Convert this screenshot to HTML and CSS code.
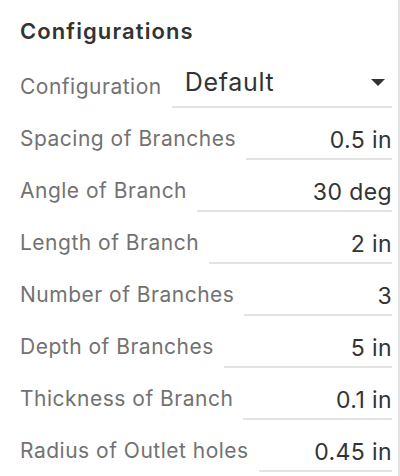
FILE: index.html
```html
<!DOCTYPE html>
<html>
<head>
<meta charset="utf-8">
<link rel="stylesheet" href="styles.css">
</head>
<body>
<div class="panel">
  <h2 class="title">Configurations</h2>
  <div class="row">
    <span class="label">Configuration</span>
    <div class="field select">
      <span class="select-value">Default</span>
      <svg class="caret" width="14" height="7" viewBox="0 0 14 7"><path d="M0 0 L14 0 L7 7 Z" fill="#333"/></svg>
    </div>
  </div>
  <div class="row"><span class="label">Spacing of Branches</span><div class="field">0.5 in</div></div>
  <div class="row"><span class="label">Angle of Branch</span><div class="field">30 deg</div></div>
  <div class="row"><span class="label">Length of Branch</span><div class="field">2 in</div></div>
  <div class="row"><span class="label">Number of Branches</span><div class="field">3</div></div>
  <div class="row"><span class="label">Depth of Branches</span><div class="field">5 in</div></div>
  <div class="row"><span class="label">Thickness of Branch</span><div class="field">0.1 in</div></div>
  <div class="row"><span class="label">Radius of Outlet holes</span><div class="field">0.45 in</div></div>
</div>
</body>
</html>
```
FILE: styles.css
```css
html, body {
  margin: 0;
  padding: 0;
  background: #fff;
}
body {
  font-family: Inter, "Noto Sans", sans-serif;
}
.panel {
  width: 400px;
  height: 476px;
  box-sizing: border-box;
  border-right: 2px solid #e3e3e3;
  padding: 0 6px 0 20px;
  overflow: hidden;
}
.title {
  margin: 0;
  padding-top: 17px;
  height: 56px;
  box-sizing: border-box;
  font-size: 22px;
  line-height: 28px;
  font-weight: 600;
  letter-spacing: 1.1px;
  color: #333;
}
.row {
  display: flex;
  align-items: flex-end;
  height: 52px;
  gap: 10px;
}
.label {
  font-size: 21px;
  line-height: 30px;
  letter-spacing: 0.5px;
  color: #727272;
  padding-bottom: 6px;
  white-space: nowrap;
}
.field {
  flex: 1;
  text-align: right;
  font-size: 23px;
  line-height: 30px;
  letter-spacing: 0.4px;
  color: #333;
  padding-bottom: 3px;
  border-bottom: 2px solid #e3e3e3;
}
.select {
  display: flex;
  align-items: center;
  justify-content: space-between;
  text-align: left;
  padding-left: 13px;
  padding-right: 7px;
  padding-bottom: 9px;
}
.select-value {
  font-size: 25px;
  line-height: 30px;
  letter-spacing: 0.7px;
}
.caret {
  display: block;
}
```
